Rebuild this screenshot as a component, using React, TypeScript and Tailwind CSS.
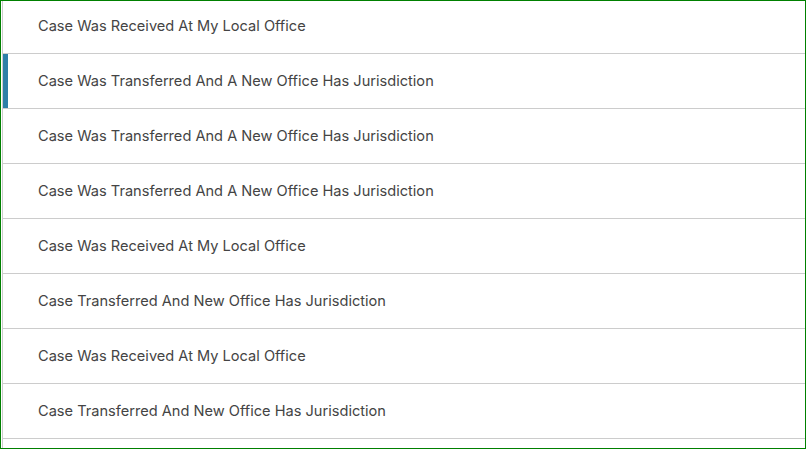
const ROWS = [
  'Case Was Received At My Local Office',
  'Case Was Transferred And A New Office Has Jurisdiction',
  'Case Was Transferred And A New Office Has Jurisdiction',
  'Case Was Transferred And A New Office Has Jurisdiction',
  'Case Was Received At My Local Office',
  'Case Transferred And New Office Has Jurisdiction',
  'Case Was Received At My Local Office',
  'Case Transferred And New Office Has Jurisdiction',
]

const ACTIVE_INDEX = 1

export default function App() {
  return (
    <div className="h-[449px] w-[806px] overflow-hidden border border-[#008000] bg-white font-['Inter',sans-serif]">
      <ul className="ml-px h-full overflow-hidden border-l border-[#cccccc]">
        {ROWS.map((label, index) => (
          <li
            key={index}
            className={`relative flex h-[55px] items-center border-b border-[#cccccc] pt-[2px] pl-[35px] text-[14.6px] text-[#444444] ${index === 0 ? '-mt-[2px]' : ''}`}
          >
            {index === ACTIVE_INDEX ? (
              <span className="absolute top-0 bottom-0 left-0 w-[5px] bg-[#2e7fa8]" />
            ) : null}
            {label}
          </li>
        ))}
      </ul>
    </div>
  )
}
